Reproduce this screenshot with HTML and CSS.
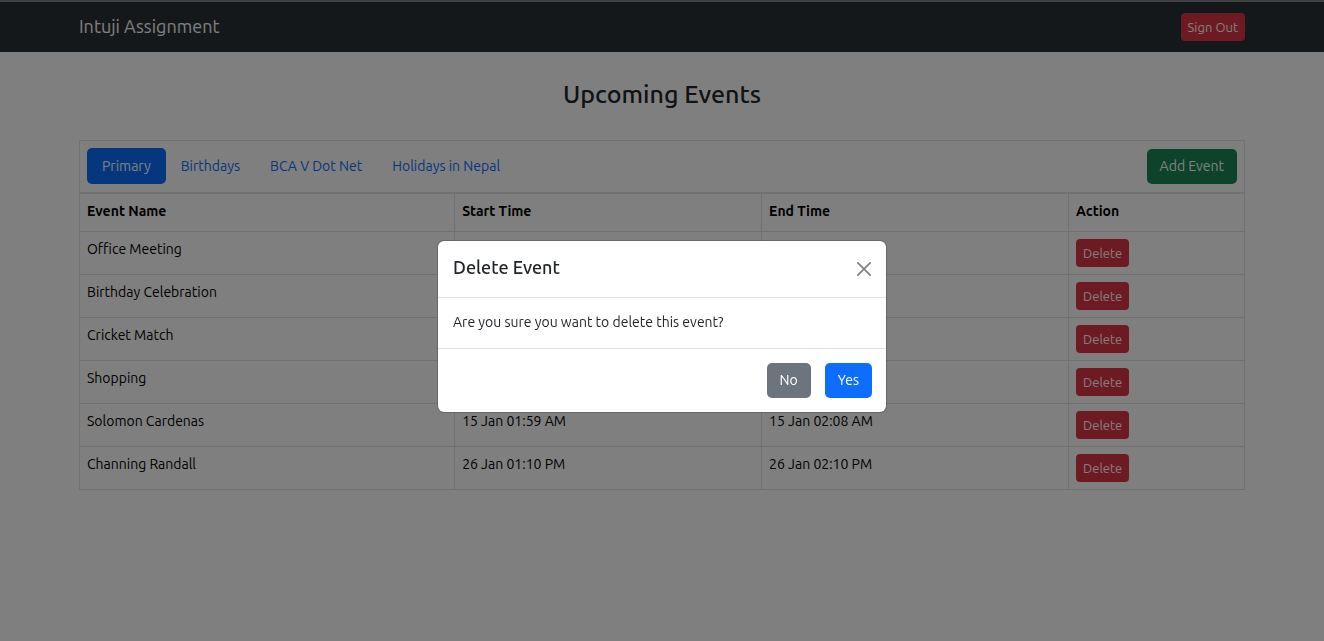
FILE: index.html
```html
<!DOCTYPE html>
<html lang="en">
<head>
<meta charset="utf-8">
<meta name="viewport" content="width=device-width, initial-scale=1">
<title>Intuji Assignment</title>
<link rel="stylesheet" href="styles.css">
</head>
<body>
<header class="navbar">
  <div class="container navbar-inner">
    <a class="brand" href="#">Intuji Assignment</a>
    <button class="btn btn-sm btn-danger" type="button">Sign Out</button>
  </div>
</header>
<main class="container">
  <h1 class="page-title">Upcoming Events</h1>
  <section class="panel">
    <div class="toolbar">
      <nav class="pills">
        <a class="pill active" href="#">Primary</a>
        <a class="pill" href="#">Birthdays</a>
        <a class="pill" href="#">BCA V Dot Net</a>
        <a class="pill" href="#">Holidays in Nepal</a>
      </nav>
      <button class="btn btn-success" type="button">Add Event</button>
    </div>
    <table class="events">
      <colgroup><col class="col-name"><col class="col-time"><col class="col-time"><col class="col-action"></colgroup>
      <thead>
        <tr><th scope="col">Event Name</th><th scope="col">Start Time</th><th scope="col">End Time</th><th scope="col">Action</th></tr>
      </thead>
      <tbody>
        <tr><td>Office Meeting</td><td></td><td></td><td><button class="btn btn-sm btn-danger" type="button">Delete</button></td></tr>
        <tr><td>Birthday Celebration</td><td></td><td></td><td><button class="btn btn-sm btn-danger" type="button">Delete</button></td></tr>
        <tr><td>Cricket Match</td><td></td><td></td><td><button class="btn btn-sm btn-danger" type="button">Delete</button></td></tr>
        <tr><td>Shopping</td><td></td><td></td><td><button class="btn btn-sm btn-danger" type="button">Delete</button></td></tr>
        <tr><td>Solomon Cardenas</td><td>15 Jan 01:59 AM</td><td>15 Jan 02:08 AM</td><td><button class="btn btn-sm btn-danger" type="button">Delete</button></td></tr>
        <tr><td>Channing Randall</td><td>26 Jan 01:10 PM</td><td>26 Jan 02:10 PM</td><td><button class="btn btn-sm btn-danger" type="button">Delete</button></td></tr>
      </tbody>
    </table>
  </section>
</main>
<div class="backdrop">
  <div class="modal" role="dialog" aria-modal="true" aria-labelledby="modal-title">
    <div class="modal-header">
      <h2 class="modal-title" id="modal-title">Delete Event</h2>
      <button class="btn-close" type="button" aria-label="Close">
        <svg viewBox="0 0 16 16" width="14" height="14" aria-hidden="true"><path d="M1 1 15 15M15 1 1 15" fill="none" stroke="currentColor" stroke-width="2" stroke-linecap="round"/></svg>
      </button>
    </div>
    <p class="modal-body">Are you sure you want to delete this event?</p>
    <div class="modal-footer">
      <button class="btn btn-secondary" type="button">No</button>
      <button class="btn btn-primary" type="button">Yes</button>
    </div>
  </div>
</div>
</body>
</html>
```
FILE: styles.css
```css
*, *::before, *::after { box-sizing: border-box; }

body {
  margin: 0;
  background: #fff;
  color: #212529;
  font: 400 14px/22px Ubuntu, "Noto Sans", "Open Sans", sans-serif;
}

.container {
  width: 100%;
  max-width: 1188px;
  margin: 0 auto;
  padding: 0 11px;
}

.navbar {
  border-top: 2px solid #808284;
  background: #2b3035;
  padding: 11px 0;
}

.navbar-inner {
  display: flex;
  align-items: center;
  justify-content: space-between;
}

.brand {
  padding-bottom: 2px;
  color: #fff;
  font-size: 18px;
  line-height: 26px;
  text-decoration: none;
}

.btn {
  padding: 6px 13px;
  border: 0;
  border-radius: 5px;
  color: #fff;
  font: inherit;
  line-height: 23px;
  cursor: pointer;
}

.btn-sm {
  padding: 4px 7px;
  border-radius: 4px;
  font-size: 13px;
  line-height: 20px;
}

.btn-danger { background: #dc3545; }
.btn-success { background: #198754; }
.btn-primary { background: #0d6efd; }
.btn-secondary { background: #6c757d; }

.page-title {
  margin: 27px 0 30px;
  font-size: 25px;
  font-weight: 500;
  line-height: 31px;
  text-align: center;
}

.panel { border-top: 1px solid #dee2e6; }

.toolbar {
  display: flex;
  align-items: center;
  justify-content: space-between;
  padding: 7px 7px 8px;
  border: solid #dee2e6;
  border-width: 0 1px 1px;
}

.pills { display: flex; }

.pill {
  padding: 7px 15px;
  border-radius: 5px;
  color: #0d6efd;
  text-decoration: none;
}

.pill.active { background: #0d6efd; color: #fff; }

.events {
  width: 100%;
  table-layout: fixed;
  border-collapse: collapse;
  color: #000;
  line-height: 20px;
}

.col-name { width: 32.2%; }
.col-time { width: 26.35%; }
.col-action { width: 15.1%; }

.events th,
.events td {
  padding: 7px;
  border: 1px solid #dee2e6;
  text-align: left;
  vertical-align: top;
}

.events th { padding-bottom: 10px; }

.events .btn { display: block; }

.backdrop {
  position: fixed;
  inset: 0;
  display: flex;
  align-items: center;
  justify-content: center;
  padding: 24px;
  padding-bottom: 12px;
  background: rgba(0, 0, 0, 0.5);
}

.modal {
  width: 100%;
  max-width: 450px;
  border: 1px solid rgba(0, 0, 0, 0.18);
  border-radius: 7px;
  background: #fff;
  background-clip: padding-box;
}

.modal-header {
  display: flex;
  align-items: center;
  justify-content: space-between;
  padding: 14px 15px;
  border-bottom: 1px solid #dee2e6;
}

.modal-title {
  margin: 0;
  padding-bottom: 4px;
  font-size: 18px;
  font-weight: 500;
  line-height: 24px;
}

.btn-close {
  display: flex;
  padding: 0;
  border: 0;
  background: none;
  color: #808080;
}

.modal-body {
  margin: 0;
  padding: 13px 15px 15px;
}

.modal-footer {
  display: flex;
  justify-content: flex-end;
  gap: 14px;
  padding: 14px;
  border-top: 1px solid #dee2e6;
}
```
